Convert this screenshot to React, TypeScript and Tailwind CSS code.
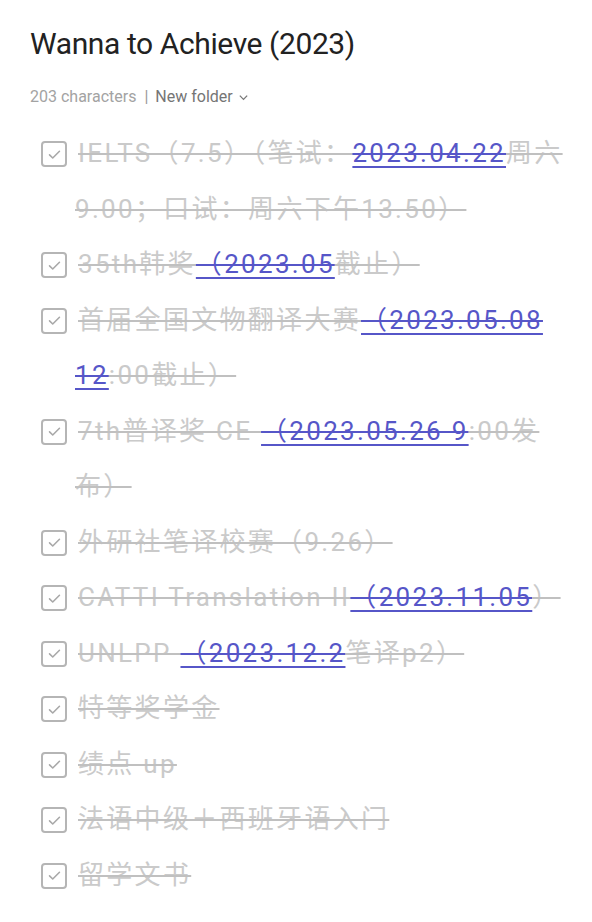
import { Fragment } from 'react';

type Seg = { text: string; link?: boolean; br?: boolean };

const items: Seg[][] = [
  [
    { text: 'IELTS（7.5）（笔试：' },
    { text: '2023.04.22', link: true },
    { text: '周六' },
    { text: '', br: true },
    { text: '9.00；口试：周六下午13.50）' },
  ],
  [{ text: '35th韩奖' }, { text: '（2023.05', link: true }, { text: '截止）' }],
  [
    { text: '首届全国文物翻译大赛' },
    { text: '（2023.05.08', link: true },
    { text: '', br: true },
    { text: '12', link: true },
    { text: ':00截止）' },
  ],
  [
    { text: '7th普译奖 CE ' },
    { text: '（2023.05.26 9', link: true },
    { text: ':00发' },
    { text: '', br: true },
    { text: '布）' },
  ],
  [{ text: '外研社笔译校赛（9.26）' }],
  [{ text: 'CATTI Translation II' }, { text: '（2023.11.05', link: true }, { text: '）' }],
  [{ text: 'UNLPP ' }, { text: '（2023.12.2', link: true }, { text: '笔译p2）' }],
  [{ text: '特等奖学金' }],
  [{ text: '绩点 up' }],
  [{ text: '法语中级＋西班牙语入门' }],
  [{ text: '留学文书' }],
];

const CheckBox = () => (
  <span className="absolute left-[-34px] top-[15px] flex h-[26px] w-[26px] items-center justify-center rounded-[4px] border-2 border-[#b5b5b5]">
    <svg viewBox="0 0 24 24" className="h-[17px] w-[17px]" fill="none" stroke="#a8a8a8" strokeWidth="2.2" strokeLinecap="round" strokeLinejoin="round">
      <path d="M5 12.5l4.5 4.5L19 7.5" />
    </svg>
  </span>
);

export default function App() {
  return (
    <div className="min-h-[922px] w-[592px] bg-white px-[30px] pt-[22px] font-['Roboto','Noto_Sans_CJK_SC',sans-serif]">
      <h1 className="text-[30px] leading-[44px] tracking-[-0.4px] text-[#222222]">Wanna to Achieve (2023)</h1>
      <div className="mt-[20px] flex items-center text-[16px] leading-[22px]">
        <span className="text-[#a3a3a3]">203 characters</span>
        <span className="ml-[8px] mr-[7px] text-[#9a9a9a]">|</span>
        <span className="text-[#757575]">New folder</span>
        <svg viewBox="0 0 12 12" className="ml-[5px] h-[11px] w-[11px]" fill="none" stroke="#777777" strokeWidth="1.4">
          <path d="M2 4l4 4 4-4" />
        </svg>
      </div>
      <ul className="mt-[18px] pl-[45px] text-[26px] leading-[55.5px] tracking-[2.3px] text-[#cacaca]">
        {items.map((segs, i) => (
          <li key={i} className="relative whitespace-nowrap indent-[3px]">
            <CheckBox />
            <span className="line-through decoration-[#c0c0c0]">
              {segs.map((s, j) => (
                <Fragment key={j}>
                  {s.br ? (
                    <br />
                  ) : s.link ? (
                    <span className="text-[#5656c8] underline decoration-[#5656c8] underline-offset-[4px]">
                      <span className="line-through decoration-[#5656c8]">{s.text}</span>
                    </span>
                  ) : (
                    s.text
                  )}
                </Fragment>
              ))}
            </span>
          </li>
        ))}
      </ul>
    </div>
  );
}
